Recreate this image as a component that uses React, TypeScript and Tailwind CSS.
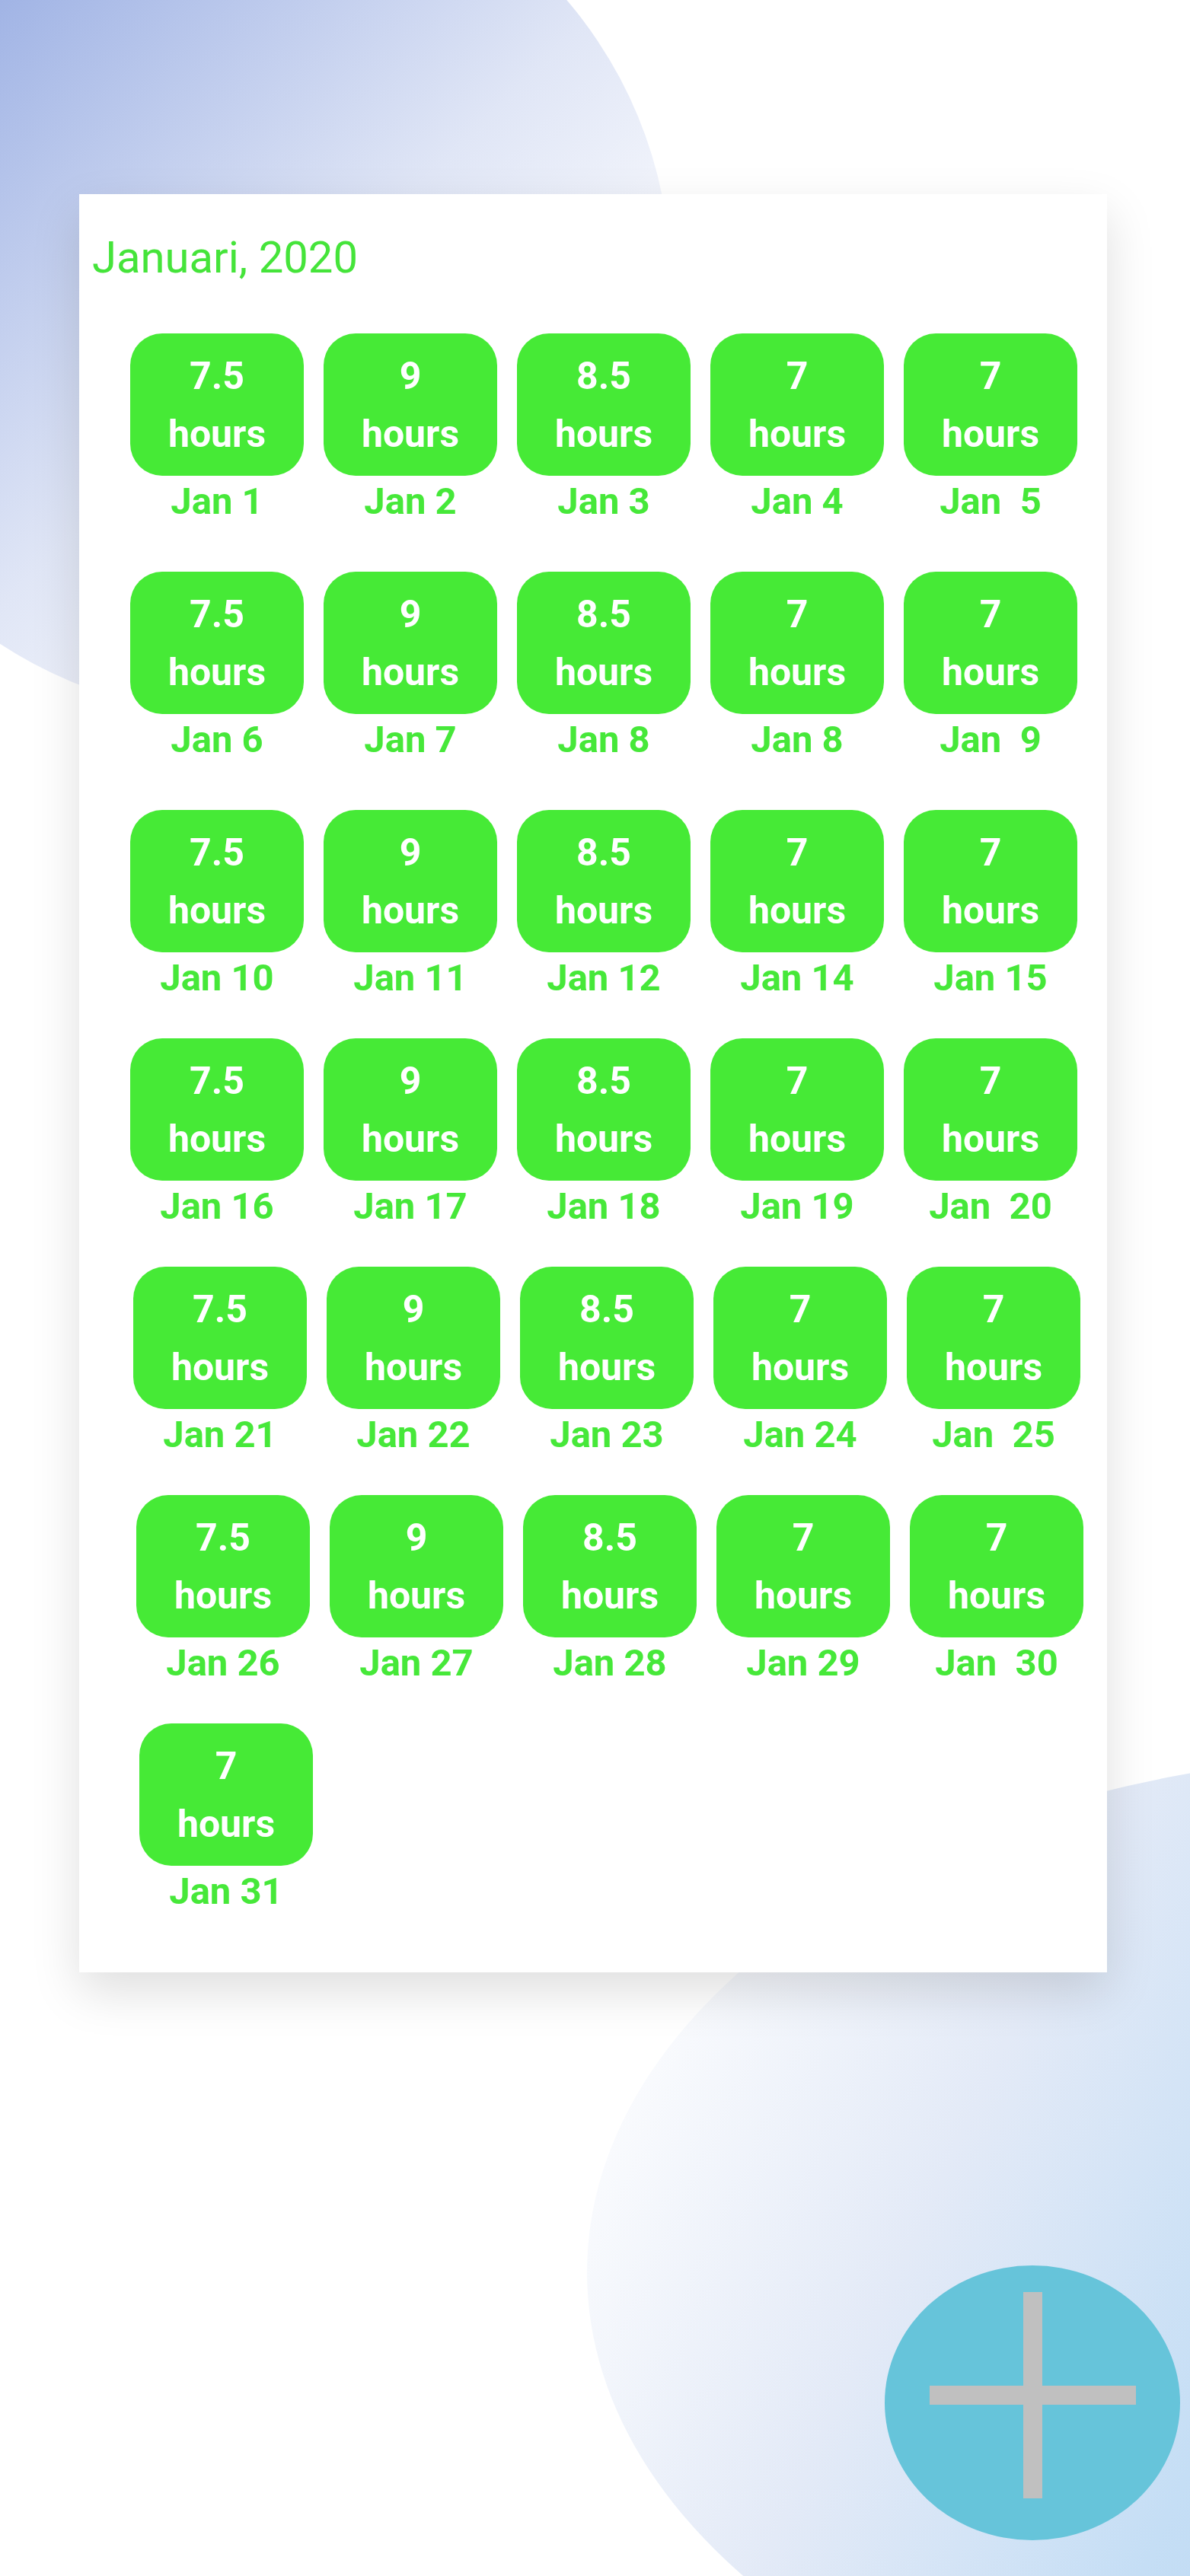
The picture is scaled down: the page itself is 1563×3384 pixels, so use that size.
import React from "react";

type Day = { h: string; d: string };

const rows: { cls: string; days: Day[] }[] = [
  {
    cls: "pl-[67px] mt-[71px]",
    days: [
      { h: "7.5", d: "Jan 1" },
      { h: "9", d: "Jan 2" },
      { h: "8.5", d: "Jan 3" },
      { h: "7", d: "Jan 4" },
      { h: "7", d: "Jan  5" },
    ],
  },
  {
    cls: "pl-[67px] mt-[58px]",
    days: [
      { h: "7.5", d: "Jan 6" },
      { h: "9", d: "Jan 7" },
      { h: "8.5", d: "Jan 8" },
      { h: "7", d: "Jan 8" },
      { h: "7", d: "Jan  9" },
    ],
  },
  {
    cls: "pl-[67px] mt-[58px]",
    days: [
      { h: "7.5", d: "Jan 10" },
      { h: "9", d: "Jan 11" },
      { h: "8.5", d: "Jan 12" },
      { h: "7", d: "Jan 14" },
      { h: "7", d: "Jan 15" },
    ],
  },
  {
    cls: "pl-[67px] mt-[45px]",
    days: [
      { h: "7.5", d: "Jan 16" },
      { h: "9", d: "Jan 17" },
      { h: "8.5", d: "Jan 18" },
      { h: "7", d: "Jan 19" },
      { h: "7", d: "Jan  20" },
    ],
  },
  {
    cls: "pl-[71px] mt-[45px]",
    days: [
      { h: "7.5", d: "Jan 21" },
      { h: "9", d: "Jan 22" },
      { h: "8.5", d: "Jan 23" },
      { h: "7", d: "Jan 24" },
      { h: "7", d: "Jan  25" },
    ],
  },
  {
    cls: "pl-[75px] mt-[45px]",
    days: [
      { h: "7.5", d: "Jan 26" },
      { h: "9", d: "Jan 27" },
      { h: "8.5", d: "Jan 28" },
      { h: "7", d: "Jan 29" },
      { h: "7", d: "Jan  30" },
    ],
  },
  {
    cls: "pl-[79px] mt-[45px]",
    days: [{ h: "7", d: "Jan 31" }],
  },
];

function DayCell({ day }: { day: Day }) {
  return (
    <div className="flex w-[228px] flex-col items-center">
      <div className="flex h-[187px] w-[228px] flex-col items-center justify-center rounded-[42px] bg-[#46ea36] text-[50px] font-bold leading-[76px] text-white">
        <span>{day.h}</span>
        <span>hours</span>
      </div>
      <div className="whitespace-pre text-[49px] font-bold leading-[68px] text-[#46e839]">
        {day.d}
      </div>
    </div>
  );
}

export default function App() {
  return (
    <div className="relative h-[3384px] w-full overflow-hidden bg-white font-['Roboto',sans-serif]">
      {/* decorative background blobs */}
      <div className="absolute left-[-257px] top-[-199px] h-[1138px] w-[1138px] rounded-full bg-[linear-gradient(135deg,#7d97db_0%,#a1b4e5_20%,#e0e6f6_55%,#f4f6fc_72%)]" />
      <div className="absolute left-[771px] top-[2305px] h-[1360px] w-[2158px] rounded-[50%] bg-[linear-gradient(115deg,#fbfcfe_8%,#e3eaf7_26%,#c5def5_44%,#b8d5f2_60%)]" />

      {/* card */}
      <div className="relative z-10 ml-[104px] mt-[255px] flex h-[2336px] w-[1350px] flex-col bg-white pt-[54px] shadow-[0_25px_60px_rgba(0,0,0,0.13)]">
        <div className="pl-[17px] text-[58px] font-normal leading-[58px] text-[#45e43a]">
          Januari, 2020
        </div>
        {rows.map((row, i) => (
          <div key={i} className={`flex gap-[26px] ${row.cls}`}>
            {row.days.map((d, j) => (
              <DayCell key={j} day={d} />
            ))}
          </div>
        ))}
      </div>

      {/* floating action button */}
      <div className="absolute left-[1162px] top-[2976px] z-20 flex h-[361px] w-[388px] items-center justify-center rounded-[50%] bg-[#66c4da] pb-[20px]">
        <div className="grid h-[271px] w-[271px] place-items-center">
          <div className="col-start-1 row-start-1 h-[271px] w-[25px] bg-[#c0c0c0]" />
          <div className="col-start-1 row-start-1 h-[25px] w-[271px] bg-[#c0c0c0]" />
        </div>
      </div>
    </div>
  );
}
